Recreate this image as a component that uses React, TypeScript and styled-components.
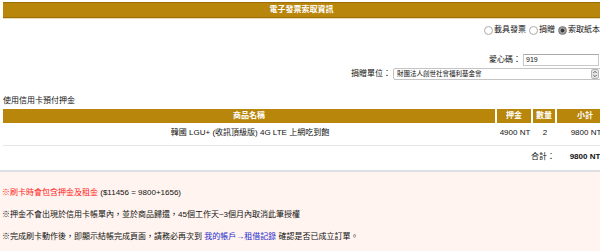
import styled, { createGlobalStyle } from "styled-components";

const GlobalStyle = createGlobalStyle`
  html, body {
    margin: 0;
    padding: 0;
    background: #fff;
    overflow: hidden;
  }
  body {
    font-family: "Liberation Sans", "Noto Sans CJK TC", sans-serif;
    font-size: 8px;
    color: #111;
  }
`;

const gold = "#b8860b";

const SelectArrows = () => (
  <svg width="8" height="10" viewBox="0 0 8 10">
    <rect x="0.5" y="0.5" width="7" height="9" rx="1.5" fill="#e4e4e4" stroke="#b5b5b5" />
    <path d="M2.3 4 L4 2.3 L5.7 4" fill="none" stroke="#555" strokeWidth="0.9" />
    <path d="M2.3 6 L4 7.7 L5.7 6" fill="none" stroke="#555" strokeWidth="0.9" />
  </svg>
);

const App = () => {
  return (
    <>
      <GlobalStyle />
      <Page>
        <TopSection>
          <TitleBar>電子發票索取資訊</TitleBar>

          <RadioRow>
            <RadioItem>
              <RadioDot />
              載具發票
            </RadioItem>
            <RadioItem>
              <RadioDot />
              捐贈
            </RadioItem>
            <RadioItem>
              <RadioDot $checked />
              索取紙本
            </RadioItem>
          </RadioRow>

          <FieldRow $top={18}>
            <FieldLabel>愛心碼：</FieldLabel>
            <TextBox>919</TextBox>
          </FieldRow>
          <FieldRow $top={2}>
            <FieldLabel>捐贈單位：</FieldLabel>
            <SelectBox>
              <span>財團法人創世社會福利基金會</span>
              <SelectArrows />
            </SelectBox>
          </FieldRow>

          <SectionLabel>使用信用卡預付押金</SectionLabel>

          <OrderTable>
            <HeadCell>商品名稱</HeadCell>
            <HeadCell>押金</HeadCell>
            <HeadCell>數量</HeadCell>
            <HeadCell>小計</HeadCell>

            <BodyCell>韓國 LGU+ (收訊頂級版) 4G LTE 上網吃到飽</BodyCell>
            <BodyCell>4900 NT</BodyCell>
            <BodyCell>2</BodyCell>
            <BodyCell>9800 NT</BodyCell>

            <TotalLabel>合計：</TotalLabel>
            <TotalValue>9800 NT</TotalValue>
          </OrderTable>
        </TopSection>

        <Notes>
          <NoteLine>
            <RedText>※刷卡時會包含押金及租金</RedText> ($11456 = 9800+1656)
          </NoteLine>
          <NoteLine>
            ※押金不會出現於信用卡帳單內，並於商品歸還，45個工作天~3個月內取消此筆授權
          </NoteLine>
          <NoteLine>
            ※完成刷卡動作後，即顯示結帳完成頁面，請務必再次到 <LinkText>我的帳戶→租借記錄</LinkText> 確認是否已成立訂單。
          </NoteLine>
        </Notes>
      </Page>
    </>
  );
};

export default App;

const Page = styled.div`
  width: 600px;
  height: 251px;
  display: flex;
  flex-direction: column;
  overflow: hidden;
`;

const TopSection = styled.div`
  padding: 2px 0 0 3px;
  display: flex;
  flex-direction: column;
`;

const TitleBar = styled.div`
  width: 597px;
  height: 14px;
  box-sizing: content-box;
  background: ${gold};
  border-top: 1px solid #9c6f06;
  border-bottom: 1px solid #9c6f06;
  box-shadow: 0 1px 0 #ecdcb4;
  color: #fff;
  font-weight: 700;
  line-height: 14px;
  text-align: center;
`;

const RadioRow = styled.div`
  width: 597px;
  margin-top: 6px;
  height: 12px;
  display: flex;
  justify-content: flex-end;
  align-items: center;
  gap: 3px;
`;

const RadioItem = styled.label`
  display: flex;
  align-items: center;
  gap: 1px;
  line-height: 12px;
`;

const RadioDot = styled.span<{ $checked?: boolean }>`
  width: 7px;
  height: 7px;
  border-radius: 50%;
  border: 1px solid ${(p) => (p.$checked ? "#7a7a7a" : "#a9a9a9")};
  background: ${(p) =>
    p.$checked
      ? "radial-gradient(circle, #3a3a3a 0 1.6px, #9b9b9b 2.2px)"
      : "#fff"};
`;

const FieldRow = styled.div<{ $top: number }>`
  width: 597px;
  margin-top: ${(p) => p.$top}px;
  display: flex;
  justify-content: flex-end;
  align-items: center;
  gap: 2px;
`;

const FieldLabel = styled.span`
  line-height: 12px;
`;

const TextBox = styled.div`
  width: 72px;
  height: 10px;
  margin-right: 1px;
  border: 1px solid #c8c8c8;
  border-top-color: #a8a8a8;
  padding-left: 2px;
  font-size: 7px;
  line-height: 10px;
  color: #111;
`;

const SelectBox = styled.div`
  width: 202px;
  height: 10px;
  margin-right: -1px;
  border: 1px solid #c4c4c4;
  border-radius: 2px;
  padding: 0 1px 0 3px;
  display: flex;
  align-items: center;
  justify-content: space-between;
  font-size: 6.5px;
  line-height: 10px;
  background: #fff;
`;

const SectionLabel = styled.div`
  margin-top: 16px;
  line-height: 10px;
`;

const OrderTable = styled.div`
  margin-top: 3px;
  width: 610px;
  display: grid;
  grid-template-columns: 492px 34px 22px 56px;
  column-gap: 2px;
`;

const HeadCell = styled.div`
  height: 14px;
  background: ${gold};
  color: #fff;
  font-weight: 700;
  line-height: 14px;
  text-align: center;
`;

const BodyCell = styled.div`
  padding: 5px 0 7px;
  line-height: 10px;
  text-align: center;
  border-bottom: 1px solid #e6e6e6;
  margin-right: -2px;
`;

const TotalLabel = styled.div`
  grid-column: 1 / 4;
  margin-top: 6px;
  line-height: 10px;
  text-align: right;
`;

const TotalValue = styled.div`
  margin-top: 6px;
  line-height: 10px;
  text-align: center;
  font-weight: 700;
`;

const Notes = styled.div`
  margin-top: 8px;
  flex: 1;
  border-top: 2px solid #dcdfe4;
  background: #fff4ef;
  padding: 16px 0 0 2px;
  display: flex;
  flex-direction: column;
  gap: 12px;
`;

const NoteLine = styled.div`
  line-height: 10px;
  white-space: nowrap;
`;

const RedText = styled.span`
  color: #ff1a1a;
`;

const LinkText = styled.span`
  color: #2a2acc;
`;
